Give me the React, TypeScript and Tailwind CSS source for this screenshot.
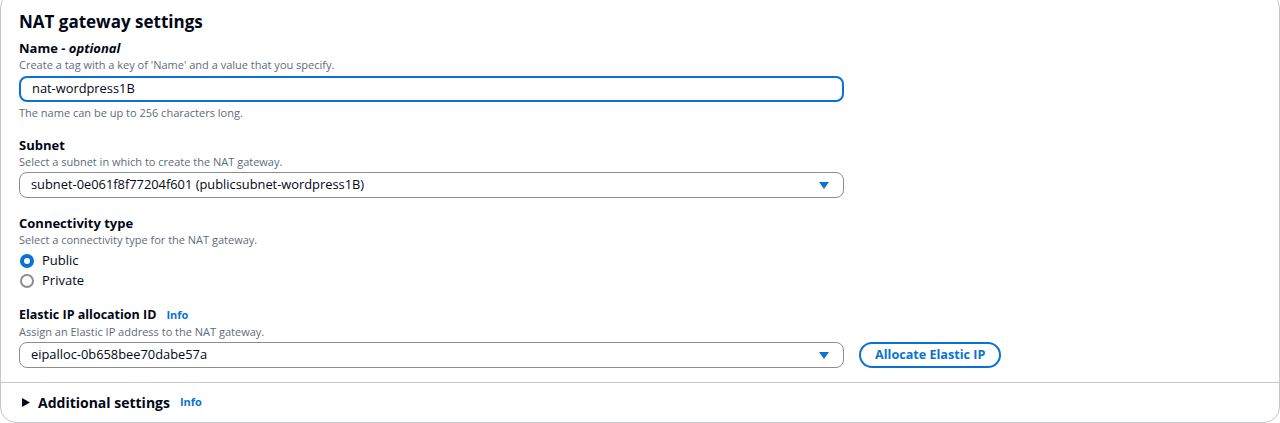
import React from "react";

const Caret = () => (
  <svg width="12" height="9" viewBox="0 0 12 9" className="shrink-0">
    <path d="M1 1h10L6 8z" fill="#0972d3" />
  </svg>
);

interface FieldProps {
  label: React.ReactNode;
  description: string;
  gap?: string;
  children: React.ReactNode;
}

const Field: React.FC<FieldProps> = ({ label, description, gap = "mt-[2px]", children }) => (
  <div className="flex flex-col">
    <div className="text-[13px] font-bold leading-[18px] text-[#000716]">{label}</div>
    <div className="text-[11px] leading-[16px] text-[#5f6b7a]">{description}</div>
    <div className={gap}>{children}</div>
  </div>
);

const Select: React.FC<{ value: string }> = ({ value }) => (
  <div className="w-[825px] h-[26px] flex items-center justify-between pl-[11px] pr-[13px] border border-[#8c8c94] rounded-[8px] text-[12.85px] text-[#000716]">
    <span>{value}</span>
    <Caret />
  </div>
);

const Radio: React.FC<{ label: string; checked?: boolean }> = ({ label, checked }) => (
  <div className="flex items-center gap-[8px] h-[20px]">
    {checked ? (
      <span className="w-[14px] h-[14px] rounded-full bg-[#0972d3] flex items-center justify-center">
        <span className="w-[6px] h-[6px] rounded-full bg-white" />
      </span>
    ) : (
      <span className="w-[14px] h-[14px] rounded-full border-2 border-[#8c8c94] bg-white" />
    )}
    <span className="text-[13px] text-[#000716]">{label}</span>
  </div>
);

const Info = () => (
  <span className="ml-[10px] text-[11px] font-bold text-[#0972d3]">Info</span>
);

export default function App() {
  return (
    <div
      className="w-[1280px] h-[423px] overflow-hidden bg-white"
      style={{ fontFamily: '"Open Sans", "Noto Sans", sans-serif' }}
    >
      <div className="-mt-[8px] h-[431px] w-[1280px] border border-[#c6c6cd] rounded-[16px] bg-white flex flex-col">
        <div className="flex flex-col px-[18px] pt-[17px]">
          <h2 className="text-[17px] font-bold leading-[24px] text-[#000716]">NAT gateway settings</h2>
          <div className="mt-[5px] flex flex-col">
            <Field
              label={
                <>
                  Name - <i>optional</i>
                </>
              }
              description="Create a tag with a key of 'Name' and a value that you specify."
              gap="mt-[3px]"
            >
              <div className="w-[825px] h-[26px] flex items-center pl-[11px] border-2 border-[#0972d3] rounded-[8px] text-[12.85px] text-[#000716]">
                nat-wordpress1B
              </div>
              <div className="mt-[3px] text-[11px] leading-[16px] text-[#5f6b7a]">
                The name can be up to 256 characters long.
              </div>
            </Field>
          </div>
          <div className="mt-[15px]">
            <Field label="Subnet" description="Select a subnet in which to create the NAT gateway.">
              <Select value="subnet-0e061f8f77204f601 (publicsubnet-wordpress1B)" />
            </Field>
          </div>
          <div className="mt-[16px]">
            <Field
              label="Connectivity type"
              description="Select a connectivity type for the NAT gateway."
              gap="mt-[3px]"
            >
              <div className="flex flex-col pl-[1px]">
                <Radio label="Public" checked />
                <Radio label="Private" />
              </div>
            </Field>
          </div>
          <div className="mt-[15px]">
            <Field
              label={
                <span className="flex items-center text-[12.5px]">
                  Elastic IP allocation ID
                  <Info />
                </span>
              }
              description="Assign an Elastic IP address to the NAT gateway."
            >
              <div className="flex items-center gap-[15px]">
                <Select value="eipalloc-0b658bee70dabe57a" />
                <button className="h-[26px] px-[14px] rounded-full border-2 border-[#0972d3] text-[12.6px] font-bold text-[#0972d3]">
                  Allocate Elastic IP
                </button>
              </div>
            </Field>
          </div>
        </div>
        <div className="mt-[14px] border-t border-[#c6c6cd] flex items-center px-[20px] h-[40px]">
          <svg width="10" height="11" viewBox="0 0 10 11" className="mr-[7px]">
            <path d="M1 1l8 4.5L1 10z" fill="#000716" />
          </svg>
          <span className="text-[14px] font-bold text-[#000716]">Additional settings</span>
          <Info />
        </div>
      </div>
    </div>
  );
}
